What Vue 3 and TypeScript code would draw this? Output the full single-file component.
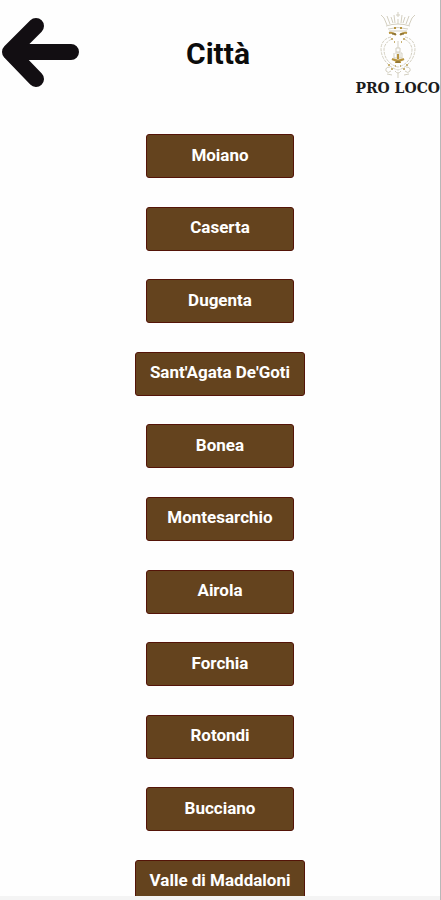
<script setup lang="ts">
import { ref } from 'vue'

const cities: string[] = [
  'Moiano',
  'Caserta',
  'Dugenta',
  "Sant'Agata De'Goti",
  'Bonea',
  'Montesarchio',
  'Airola',
  'Forchia',
  'Rotondi',
  'Bucciano',
  'Valle di Maddaloni',
]

const selected = ref<string | null>(null)

function goBack(): void {
  window.history.back()
}
</script>

<template>
  <div class="page">
    <header class="header">
      <button class="back" type="button" aria-label="Indietro" @click="goBack">
        <svg viewBox="0 0 80 72" width="80" height="72" aria-hidden="true">
          <path d="M36 10 L10 36 L36 63 M10 36 H71" />
        </svg>
      </button>
      <h1 class="title">Città</h1>
      <div class="brand">
        <svg class="crest" viewBox="0 0 40 66" width="40" height="66" aria-hidden="true">
          <!-- crown -->
          <g class="pale">
            <path d="M3 3 L6 6 L9 13 M9 4 L12 12 M13 5 L15 11 M16 3 L17 11 M20 0 V5 M18 3 H22 M20 7 V12 M24 3 L23 11 M27 5 L25 11 M31 4 L28 12 M37 3 L34 6 L31 13" />
            <path d="M8 14 Q20 10 32 14 M10 17 Q20 14 30 17 M11 19 H29" />
          </g>
          <!-- shield with its double rim -->
          <g class="pale rim">
            <path d="M13 25 Q4 27 3 36 Q3 45 9 51 Q13 56 20 58 Q27 56 31 51 Q37 45 37 36 Q36 27 27 25" />
            <path d="M14 27 Q7 30 6 37 Q6 45 11 50 Q15 54 20 55 Q25 54 29 50 Q34 45 34 37 Q33 30 26 27" />
          </g>
          <!-- tower -->
          <g class="pale">
            <path d="M19 30 H21 M20 31 V36 M18 36 H22 V40 H18 Z M17 41 H24 V46 H16 V41 M19 42 V46 M22 42 V46" />
          </g>
          <!-- scrolls under the shield -->
          <g class="pale">
            <path d="M12 55 Q7 55 8 59 Q10 62 13 59 M28 55 Q33 55 32 59 Q30 62 27 59 M9 62 L14 63 M31 62 L26 63 M17 59 Q20 63 23 59 M20 61 V66" />
          </g>
          <g class="gold">
            <path d="M11 21 Q15 20 18 23 M29 21 Q25 20 22 23 M16 16 H18 M22 16 H24" />
            <path d="M14 47 Q20 50 26 47 M17 50 H23 M20 42 V47" />
          </g>
          <g class="soft-gold">
            <path d="M13 27 H15 M25 27 H27 M16 30 H17 M23 30 H24 M13 57 H15 M25 57 H27 M17 54 H18 M22 54 H23 M10 53 H12 M28 53 H30" />
          </g>
          <g class="dark">
            <path d="M14 22 H18 M22 22 H26 M18 50 H22" />
          </g>
        </svg>
        <span class="brand-name">PRO LOCO</span>
      </div>
    </header>

    <main class="content">
      <ul class="cities">
        <li v-for="city in cities" :key="city">
          <button class="city" type="button" :aria-pressed="selected === city" @click="selected = city">
            {{ city }}
          </button>
        </li>
      </ul>
    </main>
    <footer class="bottom-bar"></footer>
  </div>
</template>

<style>
body {
  background: #fff;
}
</style>

<style scoped>
.page {
  box-sizing: border-box;
  display: flex;
  flex-direction: column;
  height: 100vh;
  border-right: 1px solid #b8b8b8;
  background: #fefefe;
  font-family: Roboto, "Liberation Sans", sans-serif;
  overflow: hidden;
}

.header {
  flex: none;
  display: grid;
  grid-template-columns: 1fr auto 1fr;
  align-items: start;
  padding-bottom: 36px;
}

.back {
  justify-self: start;
  margin-top: 16px;
  padding: 0;
  border: 0;
  background: none;
  cursor: pointer;
}

.back svg {
  display: block;
  fill: none;
  stroke: #120e12;
  stroke-width: 16;
  stroke-linecap: round;
  stroke-linejoin: round;
}

.title {
  margin: 36px 0 0;
  padding-right: 4px;
  color: #0c0c0c;
  font-size: 30px;
  font-weight: 700;
  line-height: 36px;
}

.brand {
  justify-self: end;
  display: flex;
  flex-direction: column;
  align-items: center;
  padding-top: 12px;
}

.crest {
  display: block;
  fill: none;
}

.pale {
  stroke: #d3cfc0;
  stroke-width: 1;
}

.rim {
  stroke-dasharray: 3 1;
}

.gold {
  stroke: #b8943e;
  stroke-width: 2;
}

.soft-gold {
  stroke: #c9b377;
  stroke-width: 2;
}

.dark {
  stroke: #6e5a2a;
  stroke-width: 1;
}

.brand-name {
  color: #1c1c1c;
  font-family: "DejaVu Serif", serif;
  font-size: 14px;
  font-weight: 700;
  line-height: 20px;
  white-space: nowrap;
}

.content {
  flex: 1;
  min-height: 0;
  overflow: hidden;
}

.cities {
  display: flex;
  flex-direction: column;
  justify-content: space-between;
  align-items: center;
  height: calc(100% + 8px);
  margin: 0;
  padding: 0;
  list-style: none;
}

.city {
  display: block;
  box-sizing: border-box;
  min-width: 148px;
  height: 44px;
  padding: 0 14px 3px;
  border: 1px solid #541408;
  border-radius: 3px;
  background: #64431e;
  color: #fff;
  font-family: inherit;
  font-size: 17px;
  font-weight: 700;
  line-height: 20px;
  cursor: pointer;
}

.bottom-bar {
  flex: none;
  height: 4px;
  background: #f4f4f4;
}
</style>
